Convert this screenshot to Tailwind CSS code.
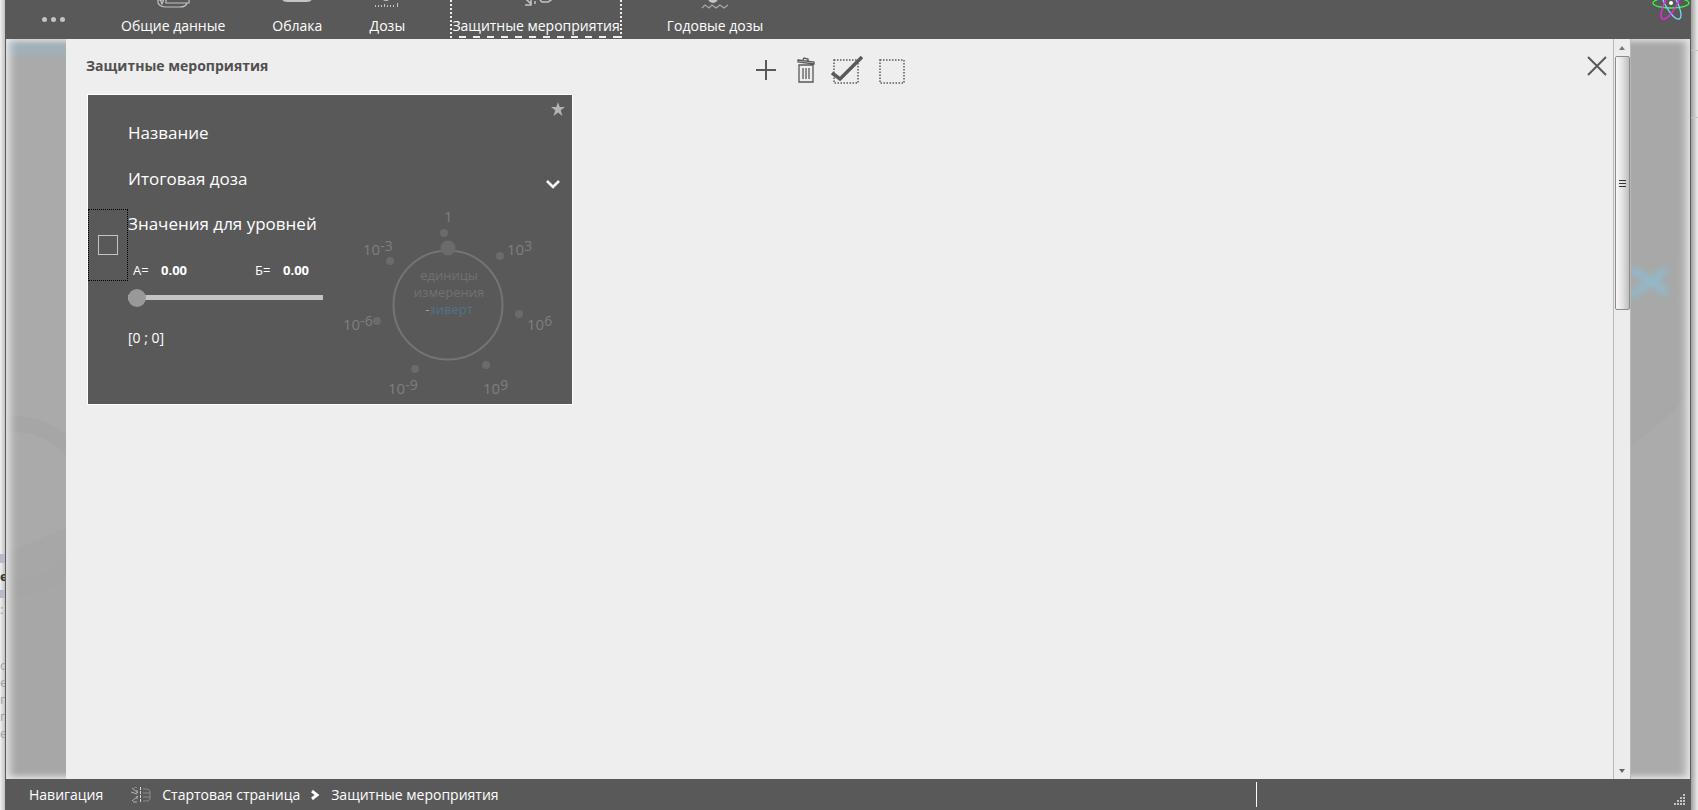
<!DOCTYPE html>
<html lang="ru" class="h-full">
  <head>
    <meta charset="UTF-8" />
    <meta name="viewport" content="width=device-width, initial-scale=1" />
    <title>Защитные мероприятия</title>
    <script src="https://cdn.jsdelivr.net/npm/@tailwindcss/browser@4"></script>
  </head>
  <body class="h-full overflow-hidden bg-[#e8e8e8] font-['Open_Sans','Noto_Sans',sans-serif] text-white">
    <div class="flex h-screen">
      <!-- page behind the window -->
      <div class="relative w-[5px] shrink-0 overflow-hidden bg-linear-to-r from-[#f0f0f0] to-[#c4c4c4] text-[13px] leading-[17px] text-[#a9a0a4]" aria-hidden="true">
        <div class="absolute top-[554px] left-0 flex w-5 flex-col">
          <span class="h-[9px] bg-[#b9bac4]"></span>
          <span class="h-[27px] leading-[27px] font-bold text-[#333]">е</span>
          <span class="h-2 bg-[#b9bac4]"></span>
          <span class="h-[59px] leading-[22px]">:</span>
          <span>о</span><span>е</span><span>п</span><span>п</span><span>е</span>
        </div>
      </div>

      <div class="flex min-w-0 flex-1 flex-col">
        <header class="flex h-[39px] shrink-0 items-end justify-between overflow-hidden bg-[#595959]">
          <nav class="flex items-end text-[14px] leading-5" aria-label="Разделы">
            <button class="mr-[54px] ml-[37px] flex h-[39px] items-center gap-1" aria-label="Меню">
              <span class="size-[5px] rounded-full bg-[#c4c4c4]"></span>
              <span class="size-[5px] rounded-full bg-[#c4c4c4]"></span>
              <span class="size-[5px] rounded-full bg-[#c4c4c4]"></span>
            </button>
            <div class="flex items-end gap-[43px]">
              <a href="#general" class="flex flex-col items-center px-[2px] pb-[3px]">
                <svg class="mb-2 h-8 w-9" viewBox="0 0 36 32" fill="none" stroke="#c4c4c4" stroke-width="1.2">
                  <path d="M3 2v25q2 4 8 4h14q6 0 7-4M11 2v25h23V2M3 24h6M5 23l2 5 2-5" />
                </svg>
                Общие данные
              </a>
              <a href="#clouds" class="flex flex-col items-center px-[2px] pb-[3px]">
                <svg class="mb-[14px] h-8 w-9" viewBox="0 0 36 32" fill="none" stroke="#c4c4c4" stroke-width="2">
                  <path d="M8 31h20q5 0 5-6t-6-6q-1-9-9-9t-9 9q-6 0-6 6t5 6z" />
                </svg>
                Облака
              </a>
              <a href="#doses" class="flex flex-col items-center px-[2px] pb-[3px]">
                <svg class="mb-2 h-8 w-9" viewBox="0 0 36 32" fill="#c4c4c4">
                  <circle cx="17" cy="20" r="5" />
                  <path d="M6 29h1v2H6zM9 29h1v2H9zM12 29h1v2h-1zM15 28h1v3h-1zM18 29h1v2h-1zM21 29h1v2h-1zM24 29h1v2h-1zM28 27h1v4h-1z" />
                </svg>
                Дозы
              </a>
              <a href="#protection" class="mb-px flex flex-col items-center border-x-2 border-dotted border-[#eeeeee]" aria-current="page">
                <svg class="mb-2 h-8 w-9" viewBox="0 0 36 32" fill="none" stroke="#c4c4c4" stroke-width="1.5">
                  <path d="M5 20l8 8M7 29h6v-6" />
                  <path d="M17 0v30" stroke-dasharray="3 2" />
                  <path d="M22 15h8l3 3v6l-3 2h-6l-2-2" />
                </svg>
                Защитные мероприятия
                <span class="h-[2px] w-full bg-[repeating-linear-gradient(90deg,transparent_0_7px,#eeeeee_7px_14px)]"></span>
              </a>
              <a href="#annual" class="flex flex-col items-center px-[2px] pb-[3px]">
                <svg class="mb-1 h-8 w-9" viewBox="0 0 36 32" fill="none" stroke="#a9a9a9" stroke-width="1.2">
                  <circle cx="16" cy="18" r="5" fill="#c4c4c4" stroke="none" />
                  <path d="M5 28l3-3 4 3 3-3 4 3 4-3 4 3 4-3" />
                </svg>
                Годовые дозы
              </a>
            </div>
          </nav>
          <svg class="h-[39px] w-10 shrink-0" viewBox="0 0 40 39" fill="none" stroke-width="1.3">
            <ellipse cx="20" cy="3" rx="18" ry="5" stroke="#33ff44" />
            <ellipse cx="20" cy="3" rx="18" ry="6" stroke="#77ddff" transform="rotate(62 20 3)" />
            <ellipse cx="20" cy="3" rx="18" ry="6" stroke="#ff22ee" transform="rotate(118 20 3)" />
            <circle cx="20" cy="3" r="2" fill="#fff" />
          </svg>
        </header>

        <div class="flex min-h-0 flex-1 border-x border-[#595959]">
          <div class="relative w-[60px] shrink-0 overflow-hidden bg-[#aaaaaa]" aria-hidden="true">
            <div class="absolute top-[505px] -left-[40px] h-[400px] w-[200px] -rotate-[22deg] bg-[#a7a7a7]"></div>
            <div class="absolute top-[377px] -left-[84px] size-[180px] rounded-full border-[16px] border-[#a6a6a6]"></div>
            <div class="absolute top-[2px] -right-4 left-0 h-[14px] bg-[#a0b1b9] blur-[3px]"></div>
            <div class="absolute inset-y-0 -right-4 left-0 shadow-[inset_5px_0_8px_-1px_#e4e4e4,inset_0_-4px_6px_-2px_#e0e0e0,inset_0_4px_6px_-3px_#e0e0e0]"></div>
          </div>

          <main class="flex min-w-0 flex-1 flex-col bg-[#eeeeee] px-[21px]">
            <div class="grid h-[55px] grid-cols-[1fr_auto_1fr] items-start pt-[17px]">
              <h1 class="-ml-px text-[14px] leading-5 font-bold text-[#505050]">Защитные мероприятия</h1>
              <div class="flex items-center gap-4 pr-5 text-[#595959]">
                <button class="mr-1" aria-label="Добавить">
                  <svg class="size-[22px]" viewBox="0 0 22 22" stroke="currentColor" stroke-width="2"><path d="M11 1v20M1 11h20" /></svg>
                </button>
                <button aria-label="Удалить">
                  <svg class="h-[26px] w-[18px]" viewBox="0 0 18 26" fill="none" stroke="currentColor" stroke-width="1.300">
                    <path d="M2 8h14v17H2zM6 11v11M9 11v11M12 11v11M1 3l16 2v2L1 5zM6 3l1-2 4 1v2" />
                  </svg>
                </button>
                <button aria-label="Выбрать все">
                  <svg class="h-7 w-8" viewBox="0 0 32 28" fill="none" stroke="currentColor">
                    <path d="M3 4h24v23H3z" stroke-width="1.5" stroke-dasharray="1.5 1.5" />
                    <path d="M1 17l8 6L31 1" stroke-width="3.5" />
                  </svg>
                </button>
                <button aria-label="Снять выбор">
                  <svg class="h-7 w-[26px]" viewBox="0 0 26 28" fill="none" stroke="currentColor">
                    <path d="M1 4h24v23H1z" stroke-width="1.5" stroke-dasharray="1.5 1.5" />
                  </svg>
                </button>
              </div>
              <button class="-mr-[15px] justify-self-end text-[#595959]" aria-label="Закрыть">
                <svg class="size-5" viewBox="0 0 20 20" stroke="currentColor" stroke-width="2"><path d="M1 1l18 18M19 1L1 19" /></svg>
              </button>
            </div>

            <section class="flex h-[311px] w-[486px] border border-white bg-[#595959]">
              <label class="mt-[114px] flex h-[72px] w-10 shrink-0 items-center justify-center border border-dotted border-black">
                <input type="checkbox" class="size-5 appearance-none border border-[#c4c4c4]" aria-label="Выбрать" />
              </label>
              <div class="w-[195px] shrink-0 pt-[25px]">
                <h2 class="mb-[21px] text-[17px] leading-[25px]">Название</h2>
                <h2 class="mb-5 text-[17px] leading-[25px]">Итоговая доза</h2>
                <h2 class="text-[17px] leading-[25px] whitespace-nowrap">Значения для уровней</h2>
                <div class="mt-[22px] flex items-center px-[5px] text-[13px] leading-6">
                  <label for="level-a" class="w-7">А=</label>
                  <input id="level-a" value="0.00" class="w-[94px] font-bold" />
                  <label for="level-b" class="w-7">Б=</label>
                  <input id="level-b" value="0.00" class="w-8 font-bold" />
                </div>
                <input
                  type="range"
                  value="0"
                  aria-label="Уровень"
                  class="mt-[6px] block h-[18px] w-[195px] appearance-none bg-transparent [&::-webkit-slider-runnable-track]:h-[5px] [&::-webkit-slider-runnable-track]:bg-[#c4c4c4] [&::-webkit-slider-thumb]:-mt-[6px] [&::-webkit-slider-thumb]:size-[18px] [&::-webkit-slider-thumb]:appearance-none [&::-webkit-slider-thumb]:rounded-full [&::-webkit-slider-thumb]:bg-[#999]"
                />
                <p class="mt-[22px] text-[14px] leading-5">[0 ; 0]</p>
              </div>
              <div class="flex min-w-0 flex-1 flex-col">
                <div class="flex flex-col items-end pt-[7px] pr-[7px]">
                  <button aria-label="Избранное">
                    <svg class="size-[14px]" viewBox="0 0 14 14" fill="#b4b4b4"><path d="M7 0l1.700 5H14l-4.300 3.200L11.500 14 7 10.500 2.500 14l1.800-5.800L0 5h5.300z" /></svg>
                  </button>
                  <button class="mt-[63px] mr-[5px]" aria-label="Развернуть">
                    <svg class="h-[10px] w-[14px]" viewBox="0 0 14 10" fill="none" stroke="#fff" stroke-width="2.500"><path d="M1 2l6 6 6-6" /></svg>
                  </button>
                </div>
                <!-- unit dial -->
                <svg class="mt-[23px] h-[190px] w-[246px] shrink-0" viewBox="0 0 246 190" fill="#6b6b6b" font-size="15">
                  <circle cx="125" cy="93" r="54.500" fill="none" stroke="#747474" stroke-width="2" />
                  <circle cx="125" cy="36" r="7.500" />
                  <circle cx="121" cy="21" r="4" />
                  <circle cx="177" cy="44" r="4" />
                  <circle cx="196" cy="102" r="4" />
                  <circle cx="163" cy="153" r="4" />
                  <circle cx="92" cy="157" r="4" />
                  <circle cx="54" cy="109" r="4" />
                  <circle cx="67" cy="49" r="4" />
                  <g fill="#7f7f7f">
                    <text x="121" y="10">1</text>
                    <text x="184" y="43">10<tspan dy="-4" font-size="14">3</tspan></text>
                    <text x="204" y="118">10<tspan dy="-4" font-size="14">6</tspan></text>
                    <text x="160" y="182">10<tspan dy="-4" font-size="14">9</tspan></text>
                    <text x="65" y="182">10<tspan dy="-4" font-size="14">-9</tspan></text>
                    <text x="20" y="118">10<tspan dy="-4" font-size="14">-6</tspan></text>
                    <text x="40" y="43">10<tspan dy="-4" font-size="14">-3</tspan></text>
                  </g>
                  <g font-size="13" text-anchor="middle" fill="#717171">
                    <text x="126" y="68">единицы</text>
                    <text x="126" y="85">измерения</text>
                    <text x="126" y="102"><tspan fill="#a0a0a0">-</tspan><tspan fill="#4f7387">зиверт</tspan></text>
                  </g>
                </svg>
              </div>
            </section>
          </main>

          <div class="flex w-[18px] shrink-0 flex-col items-center border-x border-[#b9b9b9] bg-[#ececec]">
            <button class="flex h-[17px] items-center" aria-label="Вверх">
              <svg class="h-1 w-[6px]" viewBox="0 0 6 4" fill="#777"><path d="M0 4l3-4 3 4z" /></svg>
            </button>
            <div class="flex h-[254px] w-[15px] flex-col items-center justify-center gap-[2px] rounded-xs border border-[#8c8c8c] bg-linear-to-r from-[#f8f8f8] via-[#e2e2e2] to-[#bebebe]">
              <span class="h-px w-[7px] bg-[#333]"></span>
              <span class="h-px w-[7px] bg-[#333]"></span>
              <span class="h-px w-[7px] bg-[#333]"></span>
            </div>
            <button class="mt-auto flex h-[17px] items-center" aria-label="Вниз">
              <svg class="h-1 w-[6px]" viewBox="0 0 6 4" fill="#666"><path d="M0 0l3 4 3-4z" /></svg>
            </button>
          </div>

          <div class="relative w-[59px] shrink-0 overflow-hidden bg-[#a8a8a8]" aria-hidden="true">
            <svg class="absolute inset-x-0 top-[350px] h-[400px] w-full" viewBox="0 0 59 400" preserveAspectRatio="none" fill="#ababab"><path d="M0 56Q40 30 59 0v400H0z" /></svg>
            <svg class="absolute top-[223px] -left-1 h-10 w-11 blur-[3px]" viewBox="0 0 44 40" stroke="#93b8c8" stroke-width="8" fill="none"><path d="M2 7q20 8 38 25M2 33Q20 25 40 7" /></svg>
            <div class="absolute inset-y-0 right-0 -left-4 shadow-[inset_-5px_0_8px_-1px_#e4e4e4,inset_0_-4px_6px_-2px_#e0e0e0,inset_0_4px_6px_-3px_#e0e0e0]"></div>
          </div>
        </div>

        <footer class="flex h-[31px] shrink-0 items-center bg-[#595959] text-[14px] leading-5">
          <span class="ml-6">Навигация</span>
          <svg class="ml-7 h-4 w-5" viewBox="0 0 20 16" fill="none" stroke="#b4b4b4">
            <path d="M1 1l6 5M3 0h3M0 5l6 2M1 14l6-5M2 15h4M6 3v3M6 9v3" />
            <path d="M9.500 0v16" stroke="#d8d8d8" stroke-dasharray="3 1" />
            <path d="M12 2h5l2 2v8l-2 2h-5M12 6h7M12 10h7" stroke="#8c8c8c" />
          </svg>
          <nav class="ml-[11px] flex items-center" aria-label="Навигация">
            <a href="#start">Стартовая страница</a>
            <svg class="mx-[11px] h-[10px] w-[9px]" viewBox="0 0 9 10" fill="none" stroke="#fff" stroke-width="3"><path d="M1 1l5 4-5 4" /></svg>
            <a href="#protection">Защитные мероприятия</a>
          </nav>
          <span class="mr-[417px] ml-auto h-[25px] w-px bg-white"></span>
          <svg class="mr-[6px] mb-[5px] size-[11px] self-end" viewBox="0 0 11 11" fill="#c4c4c4">
            <path d="M9 0h2v2H9zM9 3h2v2H9zM9 6h2v2H9zM9 9h2v2H9zM6 3h2v2H6zM6 6h2v2H6zM6 9h2v2H6zM3 6h2v2H3zM3 9h2v2H3zM0 9h2v2H0z" />
          </svg>
        </footer>
      </div>

      <div class="w-[7px] shrink-0 bg-linear-to-r from-[#a0a0a0] to-[#f0f0f0]">
        <div class="mt-[50px] h-[68px] border-y border-[#c8c6b8]"></div>
      </div>
    </div>
  </body>
</html>
